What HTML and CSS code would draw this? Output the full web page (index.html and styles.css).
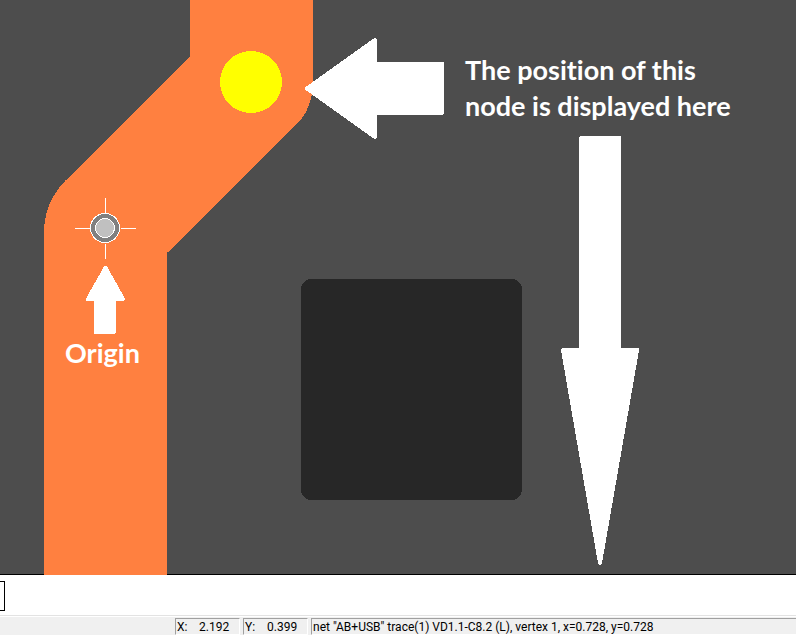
FILE: index.html
```html
<!DOCTYPE html>
<html lang="en">
<head>
<meta charset="utf-8">
<title>Board editor</title>
<link rel="stylesheet" href="styles.css">
</head>
<body>
<main class="board">
  <svg class="drawing" width="796" height="575" viewBox="0 0 796 575" shape-rendering="crispEdges" aria-hidden="true">
    <path class="trace" d="M190 0H313V83Q312 109 297 124L167 253V575H44V230Q45 202 65 181L190 57Z"/>
    <circle class="node" cx="251" cy="82" r="31"/>
    <rect class="pad" x="301" y="279" width="221" height="221" rx="10"/>
    <path class="cross" d="M105.500 198V213M105.500 244V259M75 228.500H90M121 228.500H136"/>
    <circle class="ring" cx="105" cy="228" r="14.500"/>
    <circle class="hub" cx="105" cy="228" r="9.500"/>
    <path class="arrow" d="M307 88.500L375 40V64H442V113H375V137Z"/>
    <path class="arrow" d="M581 138H619V350H637L600 563L563 350H581Z"/>
    <path class="arrow" d="M105.500 268L123 299H114V332H96V299H88Z"/>
  </svg>
  <p class="note note-position">The position of this<br>node is displayed here</p>
  <p class="note note-origin">Origin</p>
</main>
<div class="command"><input class="command-box" type="text" aria-label="Command"></div>
<footer class="status">
  <div class="cell coord"><span class="axis">X:</span><span>2.192</span></div>
  <div class="cell coord"><span class="axis">Y:</span><span>0.399</span></div>
  <div class="cell message">net "AB+USB" trace(1) VD1.1-C8.2 (L), vertex 1, x=0.728, y=0.728</div>
</footer>
</body>
</html>
```
FILE: styles.css
```css
* { box-sizing: border-box; }

body {
  margin: 0;
  min-height: 100vh;
  display: flex;
  flex-direction: column;
  background: #fff;
}

.board {
  position: relative;
  flex: 1;
  min-height: 575px;
  background: #4d4d4d;
  border-bottom: 1px solid #000;
}

.drawing { position: absolute; left: 0; top: 0; }
.trace { fill: #ff8040; }
.node { fill: #ff0; }
.pad { fill: #272727; }
.cross { stroke: #fff; fill: none; }
.ring { fill: #808080; stroke: #fff; }
.hub { fill: #c0c0c0; stroke: #fff; }
.arrow { fill: #fff; stroke: #fff; stroke-width: 4px; stroke-linejoin: round; }

.note {
  position: absolute;
  margin: 0;
  color: #fff;
  font: 700 27px/36px Lato, "Open Sans", sans-serif;
  font-variant-ligatures: none;
  white-space: nowrap;
}
.note-position { left: 465px; top: 52px; }
.note-origin { left: 65px; top: 335px; }

.command { height: 40px; padding-top: 6px; }
.command-box {
  display: block;
  width: 5px;
  height: 30px;
  padding: 0;
  border: 1px solid #000;
  border-left: 0;
  border-radius: 0;
  background: #fff;
}

.status {
  display: flex;
  gap: 3px;
  height: 20px;
  padding: 2px 0 0 175px;
  border-top: 1px solid #e3e3e3;
  background: #f0f0f0;
  box-shadow: inset 0 1px #fff;
  color: #000;
  font: 12px/16px Roboto, sans-serif;
}
.cell {
  height: 17px;
  padding-left: 1px;
  border-top: 1px solid #a0a0a0;
  border-left: 1px solid #a0a0a0;
  border-bottom: 1px solid #fff;
  white-space: nowrap;
}
.coord { display: flex; width: 65px; border-right: 1px solid #fff; }
.axis { width: 22px; }
.message { flex: 1; }
```
